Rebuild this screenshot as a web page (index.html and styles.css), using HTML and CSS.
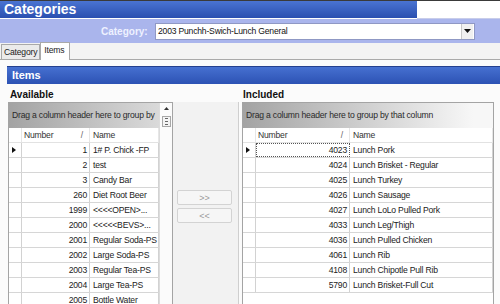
FILE: index.html
```html
<!DOCTYPE html>
<html lang="en">
<head>
  <meta charset="UTF-8" />
  <title>Categories</title>
  <link rel="stylesheet" href="styles.css">
</head>
<body>

  <div class="titlebar">
    <div class="title">Categories</div>
    <div class="title-blank"></div>
  </div>

  <div class="catbar">
    <span class="cat-label">Category:</span>
    <div class="combo">
      <span class="combo-text">2003 Punchh-Swich-Lunch General</span>
      <span class="combo-btn"><svg width="7" height="4" viewBox="0 0 7 4"><path d="M0 0h7L3.5 4z" fill="#111"/></svg></span>
    </div>
  </div>

  <div class="tabs">
    <div class="tab">Category</div>
    <div class="tab active">Items</div>
  </div>

  <main class="page">
    <div class="section-head">Items</div>

    <div class="lists">
      <div class="pane pane-avail">
        <div class="pane-label">Available</div>
        <div class="grid">
          <div class="grid-main">
            <div class="group-panel">Drag a column header here to group by</div>
            <div class="row head">
              <span class="ind"></span>
              <span class="num">Number<i>/</i></span>
              <span class="name">Name</span>
            </div>
            <div class="row"><span class="ind"><b class="arrow"></b></span><span class="num">1</span><span class="name">1# P. Chick -FP</span></div>
            <div class="row"><span class="ind"></span><span class="num">2</span><span class="name">test</span></div>
            <div class="row"><span class="ind"></span><span class="num">3</span><span class="name">Candy Bar</span></div>
            <div class="row"><span class="ind"></span><span class="num">260</span><span class="name">Diet Root Beer</span></div>
            <div class="row"><span class="ind"></span><span class="num">1999</span><span class="name">&lt;&lt;&lt;&lt;OPEN&gt;...</span></div>
            <div class="row"><span class="ind"></span><span class="num">2000</span><span class="name">&lt;&lt;&lt;&lt;&lt;BEVS&gt;...</span></div>
            <div class="row"><span class="ind"></span><span class="num">2001</span><span class="name">Regular Soda-PS</span></div>
            <div class="row"><span class="ind"></span><span class="num">2002</span><span class="name">Large Soda-PS</span></div>
            <div class="row"><span class="ind"></span><span class="num">2003</span><span class="name">Regular Tea-PS</span></div>
            <div class="row"><span class="ind"></span><span class="num">2004</span><span class="name">Large Tea-PS</span></div>
            <div class="row"><span class="ind"></span><span class="num">2005</span><span class="name">Bottle Water</span></div>
          </div>
          <div class="vscroll">
            <svg class="up" width="5" height="3" viewBox="0 0 5 3"><path d="M0 3h5L2.5 0z" fill="#333"/></svg>
            <div class="thumb"><span></span><span></span><span></span></div>
          </div>
        </div>
      </div>

      <div class="mid">
        <button class="move">&gt;&gt;</button>
        <button class="move">&lt;&lt;</button>
      </div>

      <div class="pane pane-incl">
        <div class="pane-label">Included</div>
        <div class="grid">
          <div class="grid-main">
            <div class="group-panel">Drag a column header here to group by that column</div>
            <div class="row head">
              <span class="ind"></span>
              <span class="num">Number<i>/</i></span>
              <span class="name">Name</span>
            </div>
            <div class="row"><span class="ind"><b class="arrow"></b></span><span class="num focus">4023</span><span class="name">Lunch Pork</span></div>
            <div class="row"><span class="ind"></span><span class="num">4024</span><span class="name">Lunch Brisket - Regular</span></div>
            <div class="row"><span class="ind"></span><span class="num">4025</span><span class="name">Lunch Turkey</span></div>
            <div class="row"><span class="ind"></span><span class="num">4026</span><span class="name">Lunch Sausage</span></div>
            <div class="row"><span class="ind"></span><span class="num">4027</span><span class="name">Lunch LoLo Pulled Pork</span></div>
            <div class="row"><span class="ind"></span><span class="num">4033</span><span class="name">Lunch Leg/Thigh</span></div>
            <div class="row"><span class="ind"></span><span class="num">4036</span><span class="name">Lunch Pulled Chicken</span></div>
            <div class="row"><span class="ind"></span><span class="num">4061</span><span class="name">Lunch Rib</span></div>
            <div class="row"><span class="ind"></span><span class="num">4108</span><span class="name">Lunch Chipotle Pull Rib</span></div>
            <div class="row"><span class="ind"></span><span class="num">5790</span><span class="name">Lunch Brisket-Full Cut</span></div>
          </div>
        </div>
      </div>
    </div>
  </main>

</body>
</html>
```

FILE: styles.css
```css
* {
  box-sizing: border-box;
}

body {
  margin: 0;
  width: 500px;
  height: 304px;
  overflow: hidden;
  font-family: 'Liberation Sans', Arial, sans-serif;
  font-size: 8.6px;
  letter-spacing: -0.2px;
  color: #222;
  background: #fafafa;
}

/* title */

.titlebar {
  display: flex;
  height: 19px;
  border-top: 1px solid #3a3a3a;
  background: #fff;
}

.title {
  width: 417px;
  height: 17px;
  padding-left: 4px;
  background: linear-gradient(#4a74d2, #2a4fb0);
  color: #fff;
  font-weight: bold;
  font-size: 14px;
  letter-spacing: 0;
  line-height: 17px;
}

.title-blank {
  flex: 1;
  background: #fff;
  border-bottom: 1px solid #c8cdea;
}

/* category selector */

.catbar {
  display: flex;
  align-items: center;
  height: 24px;
  padding-left: 101px;
  background: #aab5ec;
}

.cat-label {
  width: 54px;
  color: #eef1ff;
  font-weight: bold;
  font-size: 10px;
  letter-spacing: 0;
}

.combo {
  display: flex;
  align-items: center;
  width: 320px;
  height: 17px;
  background: #fff;
  border: 1px solid #8f98c4;
}

.combo-text {
  flex: 1;
  padding-left: 2px;
  color: #111;
}

.combo-btn {
  display: flex;
  align-items: center;
  justify-content: center;
  width: 12px;
  height: 15px;
  margin-right: 1px;
  background: #f0f0f0;
  border-left: 1px solid #c8c8c8;
}

/* tabs */

.tabs {
  display: flex;
  align-items: flex-end;
  height: 17px;
  padding-left: 1px;
  background: #f3f3f3;
  border-bottom: 1px solid #a9a9a9;
}

.tab {
  height: 15px;
  padding: 0 2px;
  line-height: 14px;
  background: #ebebeb;
  border: 1px solid #a9a9a9;
  border-bottom: none;
}

.tab.active {
  height: 18px;
  margin-bottom: -1px;
  padding: 0 5px 0 3px;
  line-height: 14px;
  background: #fff;
}

/* content */

.page {
  padding-top: 6px;
  background: #fbfbfb;
}

.section-head {
  height: 18px;
  margin-left: 7px;
  padding-left: 5px;
  background: linear-gradient(#4670d0, #2c52b4);
  border-top: 1px solid #24408e;
  color: #fff;
  font-weight: bold;
  font-size: 11px;
  letter-spacing: 0;
  line-height: 17px;
}

.lists {
  display: flex;
  padding-left: 8px;
}

.pane-label {
  height: 18px;
  padding-left: 2px;
  padding-top: 5px;
  font-weight: bold;
  font-size: 10px;
  letter-spacing: 0;
  color: #111;
}

.pane-incl .pane-label {
  padding-left: 1px;
}

.grid {
  display: flex;
  height: 202px;
  overflow: hidden;
  background: #fff;
  border: 1px solid #a4a4a4;
  border-bottom: none;
}

.pane-avail .grid {
  width: 165px;
}

.pane-incl .grid {
  width: 252px;
}

.grid-main {
  flex: 1;
  overflow: hidden;
}

.group-panel {
  height: 25px;
  padding-left: 3px;
  line-height: 25px;
  white-space: nowrap;
  overflow: hidden;
  color: #2a2a2a;
  background: linear-gradient(to right, #a3a3a3, #f7f7f7 230px);
}

.row {
  display: flex;
  height: 15px;
  line-height: 14px;
  border-bottom: 1px solid #d6d6d6;
}

.row.head {
  background: #fff;
  color: #333;
  border-bottom-color: #e2e2e2;
}

.row span {
  border-right: 1px solid #d2d2d2;
  white-space: nowrap;
  overflow: hidden;
}

.row .ind {
  position: relative;
  width: 13px;
}

.pane-avail .num {
  width: 68px;
}

.pane-avail .name {
  width: 69px;
}

.pane-incl .num {
  width: 94px;
}

.pane-incl .name {
  flex: 1;
}

.num {
  padding-right: 2px;
  text-align: right;
}

.name {
  padding-left: 3px;
}

.row.head .num {
  display: flex;
  justify-content: space-between;
  padding-left: 2px;
  padding-right: 6px;
  text-align: left;
}

.row.head .num i {
  font-style: normal;
  color: #666;
}

.row.head span {
  border-right-color: #e6e6e6;
}

.num.focus {
  border: 1px dotted #555;
  line-height: 12px;
}

.arrow {
  position: absolute;
  left: 3px;
  top: 4px;
  border-left: 4px solid #111;
  border-top: 3px solid transparent;
  border-bottom: 3px solid transparent;
}

/* scroll bar */

.vscroll {
  display: flex;
  flex-direction: column;
  align-items: center;
  width: 13px;
  padding-top: 4px;
  background: #fbfbfb;
  border-left: 1px solid #dcdcdc;
}

.vscroll .up {
  margin-bottom: 6px;
}

.thumb {
  display: flex;
  flex-direction: column;
  justify-content: center;
  gap: 2px;
  width: 9px;
  height: 11px;
  padding: 0 2px;
  background: #f4f4f4;
  border: 1px solid #a8a8a8;
}

.thumb span {
  height: 1px;
  background: #666;
}

/* middle buttons */

.mid {
  display: flex;
  flex-direction: column;
  gap: 3px;
  width: 66px;
  height: 202px;
  margin-top: 18px;
  margin-right: 3px;
  padding: 88px 6px 0 4px;
  background: #f2f2f2;
  border-right: 1px solid #cfcfcf;
}

.move {
  height: 15px;
  padding: 0;
  font-family: inherit;
  font-size: 9px;
  color: #9a9a9a;
  background: #f6f6f6;
  border: 1px solid #d3d3d3;
  border-radius: 2px;
}
```
